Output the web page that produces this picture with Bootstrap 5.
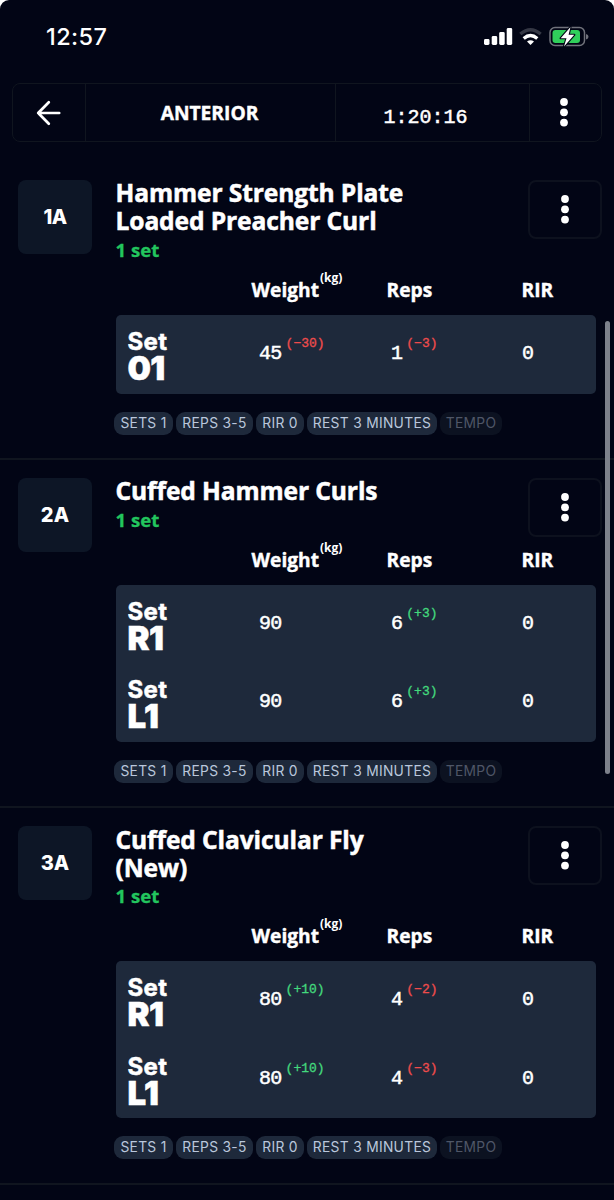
<!DOCTYPE html>
<html lang="en">
<head>
<meta charset="utf-8">
<meta name="viewport" content="width=device-width, initial-scale=1">
<title>Anterior workout</title>
<link href="https://cdn.jsdelivr.net/npm/bootstrap@5.3.0/dist/css/bootstrap.min.css" rel="stylesheet">
<style>
:root{--ink:#020515;--line:#10151f;--panel:#1e293b;--tile:#0d1626}
html{background:#fff}
body{background:#fff;color:#fff;font-family:"Open Sans",Lato,sans-serif;height:1200px;overflow:hidden}
.screen{background:var(--ink);height:1200px;border-radius:9px 9px 0 0;overflow:hidden}
.status{height:83px;padding:0 25px 9px 46px}
.clock{font:500 23.5px/30px Inter,sans-serif;letter-spacing:.4px}
.topbar{margin:0 12px;height:59px;border:1.5px solid var(--line);border-radius:8px}
.topbar>*+*{border-left:1.5px solid var(--line)}
.w-back{width:72px}.w-title{width:250px}.w-time{width:194px}
.topbar h1{font-size:19.2px;font-weight:700;margin:0 2px 0 0;-webkit-text-stroke:.4px #fff}
.mono{font-family:"Liberation Mono",monospace}
.timer{font-size:20px;padding:11px 14px 0 0;-webkit-text-stroke:.5px #fff}
.exercise{border-bottom:2px solid var(--line);padding-top:18px}
.ex1{margin-top:20px;height:298px}.ex2{height:348px}.ex3{height:377px}
.tile{width:74px;height:74px;border-radius:8px;background:var(--tile);margin:0 24px 0 18px;font:800 20px/74px Inter,sans-serif;letter-spacing:-.5px}
.ex2 .tile,.ex3 .tile{letter-spacing:.1px}
.name{font-size:24.6px;line-height:28.2px;font-weight:700;margin:-1px 0 0 -.5px;width:330px;white-space:nowrap;letter-spacing:-.12px;-webkit-text-stroke:.5px #fff}
.ex3 .name{margin-top:-.3px;margin-bottom:-.7px}
.count{color:#22c55e;font-size:18.6px;line-height:29px;font-weight:700;-webkit-text-stroke:.3px currentColor;margin-left:-.5px}
.more{width:74px;height:59px;border:2px solid #0d111e;border-radius:8px;margin:0 12px -4px 0}
.log{width:480px;margin-left:-.5px}
.cols{display:grid;grid-template-columns:136px 135px 135px 1fr}
.heads{height:51px;padding-top:14px;font-size:19.2px;line-height:24px;font-weight:700;-webkit-text-stroke:.4px #fff}
.unit{font-size:12px;line-height:14px;margin:-7px 0 0 1px;-webkit-text-stroke:0}
.sets{background:var(--panel);border-radius:5px}
.setrow{height:78.5px;padding-top:12.5px}
.ex3 .setrow{padding-top:13px}
.who{padding-left:12px;font:700 24px/27px Inter,sans-serif;letter-spacing:.4px;-webkit-text-stroke:.5px #fff}
.who b{display:block;font-weight:900;font-size:33px;line-height:27px;letter-spacing:-.6px}
.val{font-size:20px;letter-spacing:-.7px;line-height:24px;padding:14px 0 0 .5px;-webkit-text-stroke:.5px #fff}
.v1{padding-left:7.5px}.v2{padding-left:4.5px}
.val sup{font-size:13px;letter-spacing:0;line-height:16px;top:0;margin:-6px 0 0 4px;-webkit-text-stroke:.3px currentColor}
.up{color:#43d87d}.down{color:#ef4c4c}
.chips{margin:18px 0 0 -1.5px;gap:3px;width:400px}
.chip{height:23px;border-radius:9px;background:var(--panel);color:#bac7dc;font:400 13.8px/23px Inter,sans-serif;letter-spacing:.3px;text-align:center;white-space:nowrap}
.c1{width:59px}.c2{width:77px}.c3{width:48px}.c4{width:130px}.c5{width:62px;background:#0c1221;color:#4f5667}
.thumb{position:fixed;left:605px;top:321px;width:5px;height:453px;border-radius:3px;background:#7d818b}
</style>
</head>
<body>
<svg width="0" height="0" class="position-absolute"><defs><g id="dots" fill="#fff"><circle cx="5" cy="5" r="3.9"/><circle cx="5" cy="15.3" r="3.9"/><circle cx="5" cy="25.6" r="3.9"/></g></defs></svg>
<main class="screen">
  <header class="status d-flex align-items-center justify-content-between">
    <div class="clock">12:57</div>
    <svg width="106" height="22" viewBox="483 26 106 22">
      <g fill="#fff"><rect x="484" y="39" width="5.5" height="6" rx="1.4"/><rect x="491.7" y="36" width="5.5" height="9" rx="1.4"/><rect x="499.2" y="32" width="5.5" height="13" rx="1.4"/><rect x="506.7" y="28" width="5.5" height="17" rx="1.4"/></g>
      <g fill="none" stroke-width="3.3"><path stroke="#343744" d="M520.3 34Q530.5 25.5 540.7 34"/><path stroke="#fff" d="M523.7 38.5Q530.5 32.5 537.3 38.5"/></g>
      <path fill="#fff" d="M527 41.6Q530.5 38.8 534 41.6L530.5 45Z"/>
      <rect x="550" y="27.5" width="34.5" height="18" rx="5" fill="none" stroke="#70727b" stroke-width="1.5"/>
      <rect x="552.5" y="30" width="27.5" height="13" rx="3" fill="#30cf5b"/>
      <path d="M586 34Q588.5 34.5 588.5 36.8T586 39.6Z" fill="#70727b"/>
      <path d="M570.5 27L560.7 38.2H566.5L564 46.5L574.3 34.8H568.6Z" fill="#fff" stroke="#020515" stroke-width="2.2" paint-order="stroke" stroke-linejoin="round"/>
    </svg>
  </header>
  <nav class="topbar d-flex">
    <div class="w-back d-flex align-items-center justify-content-center"><svg width="26" height="26" viewBox="0 0 26 26" fill="none" stroke="#fff" stroke-width="2.7" stroke-linecap="round" stroke-linejoin="round"><path d="M23.2 13H2.2M12.8 2.3L2.2 13L12.8 23.7"/></svg></div>
    <div class="w-title d-flex align-items-center justify-content-center"><h1>ANTERIOR</h1></div>
    <div class="w-time mono timer d-flex align-items-center justify-content-center">1:20:16</div>
    <div class="flex-fill d-flex align-items-center justify-content-center"><svg width="12" height="31" viewBox="1 0 12 31"><use href="#dots"/></svg></div>
  </nav>

  <section class="exercise ex1 d-flex">
    <div class="tile flex-shrink-0 text-center">1A</div>
    <div class="flex-fill">
      <div class="d-flex justify-content-between align-items-start">
        <div><h2 class="name">Hammer Strength Plate<br>Loaded Preacher Curl</h2><div class="count">1 set</div></div>
        <div class="more d-flex align-items-center justify-content-center"><svg width="10" height="31"><use href="#dots"/></svg></div>
      </div>
      <div class="log">
        <div class="cols heads"><span></span><div class="d-flex align-items-start">Weight<span class="unit">(kg)</span></div><div>Reps</div><div>RIR</div></div>
        <div class="sets">
          <div class="cols setrow"><div class="who">Set<b>01</b></div><div class="val v1 mono d-flex align-items-start">45<sup class="down">(−30)</sup></div><div class="val v2 mono d-flex align-items-start">1<sup class="down">(−3)</sup></div><div class="val mono">0</div></div>
        </div>
        <div class="chips d-flex"><span class="chip c1">SETS 1</span><span class="chip c2">REPS 3-5</span><span class="chip c3">RIR 0</span><span class="chip c4">REST 3 MINUTES</span><span class="chip c5">TEMPO</span></div>
      </div>
    </div>
  </section>

  <section class="exercise ex2 d-flex">
    <div class="tile flex-shrink-0 text-center">2A</div>
    <div class="flex-fill">
      <div class="d-flex justify-content-between align-items-start">
        <div><h2 class="name">Cuffed Hammer Curls</h2><div class="count">1 set</div></div>
        <div class="more d-flex align-items-center justify-content-center"><svg width="10" height="31"><use href="#dots"/></svg></div>
      </div>
      <div class="log">
        <div class="cols heads"><span></span><div class="d-flex align-items-start">Weight<span class="unit">(kg)</span></div><div>Reps</div><div>RIR</div></div>
        <div class="sets">
          <div class="cols setrow"><div class="who">Set<b>R1</b></div><div class="val v1 mono">90</div><div class="val v2 mono d-flex align-items-start">6<sup class="up">(+3)</sup></div><div class="val mono">0</div></div>
          <div class="cols setrow"><div class="who">Set<b>L1</b></div><div class="val v1 mono">90</div><div class="val v2 mono d-flex align-items-start">6<sup class="up">(+3)</sup></div><div class="val mono">0</div></div>
        </div>
        <div class="chips d-flex"><span class="chip c1">SETS 1</span><span class="chip c2">REPS 3-5</span><span class="chip c3">RIR 0</span><span class="chip c4">REST 3 MINUTES</span><span class="chip c5">TEMPO</span></div>
      </div>
    </div>
  </section>

  <section class="exercise ex3 d-flex">
    <div class="tile flex-shrink-0 text-center">3A</div>
    <div class="flex-fill">
      <div class="d-flex justify-content-between align-items-start">
        <div><h2 class="name">Cuffed Clavicular Fly<br>(New)</h2><div class="count">1 set</div></div>
        <div class="more d-flex align-items-center justify-content-center"><svg width="10" height="31"><use href="#dots"/></svg></div>
      </div>
      <div class="log">
        <div class="cols heads"><span></span><div class="d-flex align-items-start">Weight<span class="unit">(kg)</span></div><div>Reps</div><div>RIR</div></div>
        <div class="sets">
          <div class="cols setrow"><div class="who">Set<b>R1</b></div><div class="val v1 mono d-flex align-items-start">80<sup class="up">(+10)</sup></div><div class="val v2 mono d-flex align-items-start">4<sup class="down">(−2)</sup></div><div class="val mono">0</div></div>
          <div class="cols setrow"><div class="who">Set<b>L1</b></div><div class="val v1 mono d-flex align-items-start">80<sup class="up">(+10)</sup></div><div class="val v2 mono d-flex align-items-start">4<sup class="down">(−3)</sup></div><div class="val mono">0</div></div>
        </div>
        <div class="chips d-flex"><span class="chip c1">SETS 1</span><span class="chip c2">REPS 3-5</span><span class="chip c3">RIR 0</span><span class="chip c4">REST 3 MINUTES</span><span class="chip c5">TEMPO</span></div>
      </div>
    </div>
  </section>
</main>
<div class="thumb"></div>
<script src="https://cdn.jsdelivr.net/npm/bootstrap@5.3.0/dist/js/bootstrap.bundle.min.js"></script>
</body>
</html>
